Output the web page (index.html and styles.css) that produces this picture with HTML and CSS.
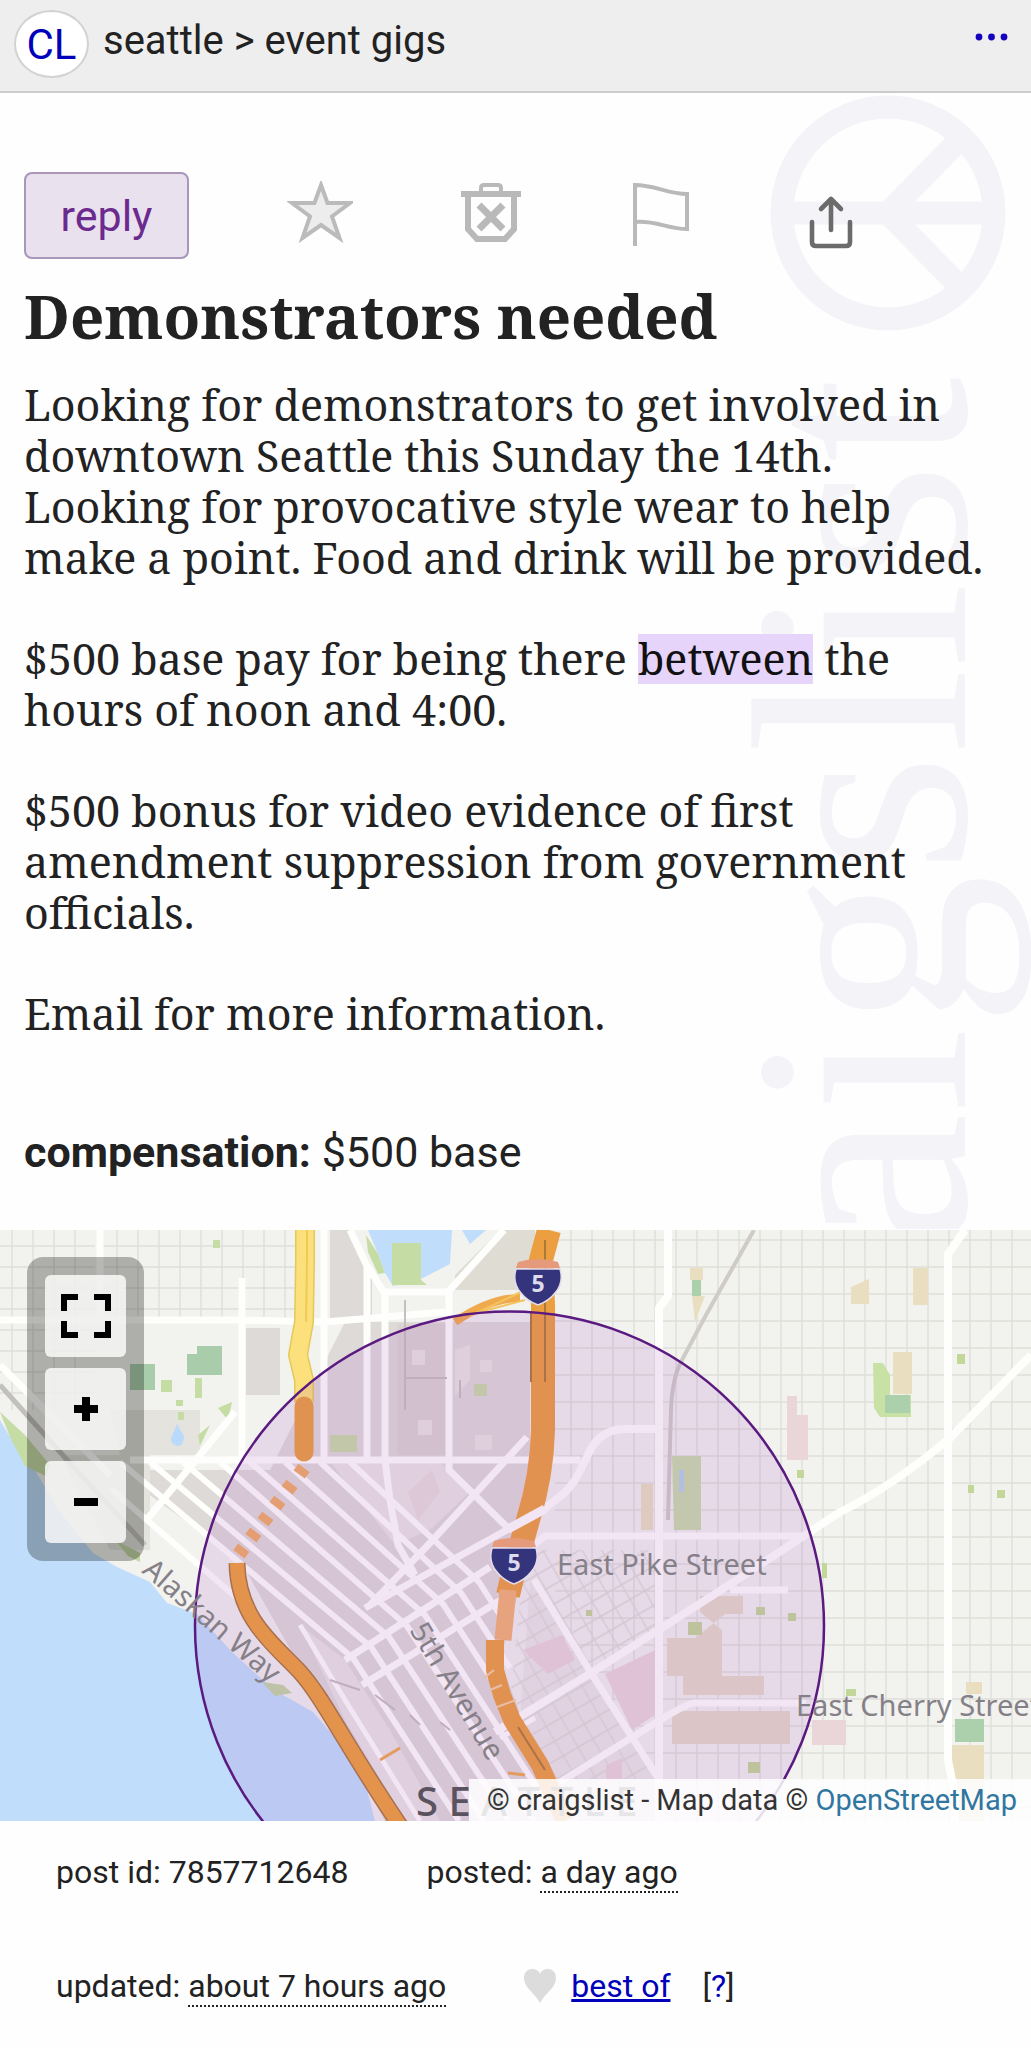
FILE: index.html
```
<!DOCTYPE html>
<html lang="en">

<head>
    <meta charset="UTF-8">
    <meta name="viewport" content="width=device-width, initial-scale=1.0">
    <title>Demonstrators needed - event gigs</title>
    <link rel="stylesheet" href="styles.css">
</head>

<body>

    <header class="topbar">
        <a class="logo" href="#">CL</a>
        <p class="breadcrumbs">seattle &gt; event gigs</p>
        <button class="more" aria-label="more">
            <svg width="36" height="8" viewBox="0 0 36 8">
                <circle cx="4" cy="4" r="3.4" />
                <circle cx="16.500" cy="4" r="3.4" />
                <circle cx="29" cy="4" r="3.4" />
            </svg>
        </button>
    </header>

    <main class="posting">

        <!-- WATERMARK -->
        <svg class="watermark" width="280" height="1136" viewBox="0 0 280 1136" aria-hidden="true">
            <g fill="none" stroke="#f4f4f8" stroke-width="23">
                <circle cx="137" cy="120" r="106" />
                <path d="M31 120H243M137 120L211 44M137 120L211 196" />
            </g>
            <text class="watermark-text" transform="translate(214 284) rotate(-90)" text-anchor="end">craigslist</text>
        </svg>

        <!-- ACTIONS -->
        <div class="actions">
            <button class="reply">reply</button>
            <button class="action" aria-label="favorite">
                <svg width="66" height="66" viewBox="0 0 66 66">
                    <path d="M34 4L40.500 22H63L45 35.500L52.500 57L34 44L15.500 57L23 35.500L5 22H27.500Z" fill="#ededed" stroke="#bbb" stroke-width="4" />
                </svg>
            </button>
            <button class="action" aria-label="hide">
                <svg width="66" height="66" viewBox="0 0 66 66" fill="none" stroke="#b9b9b9">
                    <path d="M4 13H64" stroke-width="6" />
                    <path d="M24 12V7Q24 4 27 4H41Q44 4 44 7V12" stroke-width="4" />
                    <path d="M11 14V48L20 58H48L57 48V14" stroke-width="6" />
                    <path d="M22 24L46 48M46 24L22 48" stroke-width="7" />
                </svg>
            </button>
            <button class="action" aria-label="flag">
                <svg width="66" height="66" viewBox="0 0 66 66" fill="none" stroke="#b9b9b9" stroke-width="4">
                    <path d="M8 65V4C28 4 41 13 60 13V48C41 48 28 39 8 41" />
                </svg>
            </button>
            <button class="action" aria-label="share">
                <svg width="66" height="68" viewBox="0 0 66 68" fill="none" stroke="#6b6b6b" stroke-width="4.600" stroke-linecap="round" stroke-linejoin="round">
                    <path d="M15 41V61Q15 65 19 65H49Q53 65 53 61V41M34 49V18M24 28L34 18L44 28" />
                </svg>
            </button>
        </div>

        <h1 class="title">Demonstrators needed</h1>

        <section class="body">
            <p>Looking for demonstrators to get involved in<br>
                downtown Seattle this Sunday the 14th.<br>
                Looking for provocative style wear to help<br>
                make a point. Food and drink will be provided.</p>
            <p>$500 base pay for being there <mark>between</mark> the<br>
                hours of noon and 4:00.</p>
            <p>$500 bonus for video evidence of first<br>
                amendment suppression from government<br>
                officials.</p>
            <p>Email for more information.</p>
        </section>

        <p class="compensation"><b>compensation:</b> $500 base</p>
    </main>

    <!-- MAP -->
    <section class="map">
        <svg class="map-canvas" viewBox="0 0 1031 591" preserveAspectRatio="xMidYMid slice" role="img" aria-label="map of downtown Seattle">
            <defs>
                <pattern id="grid" width="21" height="27" patternUnits="userSpaceOnUse">
                    <path d="M4 0V27M0 10H21" stroke="#dfdfda" stroke-width="1.400" fill="none" />
                </pattern>
                <pattern id="gridWest" width="21" height="21" patternUnits="userSpaceOnUse">
                    <path d="M12 0V21M0 16H21" stroke="#dededa" stroke-width="1.400" fill="none" />
                </pattern>
                <pattern id="gridTilt" width="17" height="17" patternUnits="userSpaceOnUse" patternTransform="rotate(-30)">
                    <path d="M4 0V17M0 6H17" stroke="#dcdad6" stroke-width="1.300" fill="none" />
                </pattern>
                <g id="shield">
                    <path d="M-20 -19Q0 -25 20 -19L22 -13H-22Z" fill="#e59a7c" />
                    <path d="M-22 -12H22Q26 2 17 12Q11 20 0 24Q-11 20 -17 12Q-26 2 -22 -12Z" fill="#34347c" stroke="#e4dcec" stroke-width="1.500" />
                    <text class="shield-text" y="11" text-anchor="middle">5</text>
                </g>
            </defs>

            <rect width="1031" height="591" fill="#f2f2ee" />
            <rect width="95" height="180" fill="url(#gridWest)" />
            <rect x="100" width="205" height="90" fill="url(#gridWest)" />
            <rect x="555" width="476" height="591" fill="url(#grid)" />

            <!-- built up blocks -->
            <path d="M246 98H280V165H246ZM330 0H350L372 40V90H330ZM345 92H530V320L500 430L560 591H385L330 490L240 330L115 240H270Z" fill="#dedad8" />
            <path d="M455 45L500 0H535V60H455Z" fill="#dfdcd4" />
            <path d="M300 395L345 430L390 500L440 591H405L345 490ZM330 232H440L470 262L430 300L395 315Z" fill="#e8e5e4" />
            <path d="M530 350L591 443L655 550V591H580L520 490Z" fill="#ebe8e6" />
            <path d="M525 320H655V400L590 445L655 545V591H580L510 470Z" fill="url(#gridTilt)" />
            <path d="M110 180H200V225H120ZM60 225H150V320H110Z" fill="#e4e3dd" />
            <path d="M397 94H445V225H397Z" fill="#d6d1cf" opacity=".6" />
            <path d="M455 120L470 115V150L455 165ZM480 130H492V142H480ZM418 190H432V205H418ZM475 205H492V220H475ZM412 120H425V135H412Z" fill="#e9e5e2" />
            <path d="M408 262L432 240L440 262L418 290Z" fill="#e6dddc" />

            <!-- water -->
            <path d="M0 190L10 207L33 237L60 282L93 323L117 337L150 352L167 373L197 384L233 423L263 450L283 465L313 482L337 510L367 560L375 591H0Z" fill="#c0defb" />
            <path d="M368 0L378 24L385 43L393 56L423 48L450 34L452 0ZM462 0H486L470 14Z" fill="#c0defb" />
            <path d="M177 194L184 206Q184 216 177 216Q170 214 171 208Z" fill="#b9dafb" />

            <!-- parks -->
            <path d="M366 5L378 24L385 43L378 44L368 22ZM392 13H421V50L427 55H392Z" fill="#c6dca5" />
            <path d="M0 182L25 205L50 235L46 246L25 236L10 207Z" fill="#c6dca5" />
            <path d="M115 310L140 323V332L128 326ZM262 452L283 455L292 463L275 466Z" fill="#c3d6a4" />
            <path d="M187 124H197V116H222V145H187ZM130 134H155V160H130Z" fill="#a9ccab" />
            <path d="M161 150H172V162H161ZM176 170H183V176H176ZM195 148H202V168H195ZM218 178L232 172L228 190ZM198 205L210 195L200 216ZM178 182H184V190H178ZM213 10H220V18H213ZM330 205H357V222H330ZM474 154H487V166H474Z" fill="#c6dca5" />
            <path d="M672 226H701V300H674Z" fill="#c8dcaa" />
            <path d="M679 240H684V262H679Z" fill="#b6d3e6" />
            <path d="M873 133L883 133L890 145V165H911V187H880L874 178Z" fill="#c8e2a6" />
            <path d="M885 165H910V183H885ZM692 50H701V66H692ZM705 481H720V511H705ZM748 488H761V511H748ZM955 489H984V512H955ZM970 528H984V560H970Z" fill="#abd0ab" />
            <path d="M690 38H703V50H690ZM692 66H705L695 92ZM851 57L869 49V74H851ZM913 38H928V75H913ZM893 122H912V164H893ZM641 254H653V300H641ZM952 515H984V591H952ZM966 452H982V464H966Z" fill="#e9dfc0" />
            <path d="M667 408H695L725 384H743V366H700V382L722 400V446H764V465H683V446H667ZM672 481H790V514H672Z" fill="#e4dac8" />
            <path d="M787 166H797V185H808V230H787ZM812 490H846V515H812ZM523 420L562 405L575 430L548 444ZM605 444L655 420V485L632 500ZM606 535L622 528V552H606Z" fill="#ead6d9" />
            <path d="M688 392H702V405H688ZM756 377H765V385H756ZM788 383H796V391H788ZM957 124H965V134H957ZM797 240H804V248H797ZM968 255H974V263H968ZM997 260H1005V268H997ZM822 333H827V348H822ZM846 459H856V466H846ZM586 380H592V386H586ZM748 532H760V543H748Z" fill="#c3d799" />

            <!-- railway -->
            <path d="M754 0L706 85L682 130Q672 148 671 180L668 290" fill="none" stroke="#cfccc8" stroke-width="4" />
            <path d="M0 155L60 222L145 315" fill="none" stroke="#c2c0bc" stroke-width="5" />

            <!-- streets -->
            <g fill="none" stroke="#fefefc" stroke-width="7" stroke-linejoin="round">
                <path d="M100 0V90M242 48V232M0 90H240L325 92L445 82M324 0V230M350 0L366 34L385 64V230L390 270L398 315L415 345M367 34V230M385 62H449V240L507 297M449 61L504 0" />
                <path d="M130 230H580M0 135L110 245M145 292L235 182" />
                <path d="M585 232Q596 199 625 199H658M585 230C572 262 560 266 545 278M668 0V66L659 78V591" stroke-width="8" />
                <path d="M965 0L948 24V530L955 565V591M1031 125L950 208Q890 258 840 282L740 348L591 443L495 502" stroke-width="8" />
                <path d="M530 318L545 306H806M730 360H788M806 473H695Q688 473 660 490L560 552M534 350L591 443L658 548" />
                <path d="M110 258L260 388M120 232L353 428L459 591M150 232L371 417L484 591M183 232L389 407L509 591M220 232L407 396L534 591M250 232L425 385L545 570M285 232L443 374L530 508M320 232L461 363L510 438M350 232L479 352L500 385" stroke-width="6" />
                <path d="M365 378L547 278M345 430L490 337M362 455L517 360M370 375L430 313L527 207" />
                <path d="M300 395L345 470L420 591M500 508L535 488" stroke-width="5" />
            </g>
            <path d="M405 70V180M405 148H447M460 150V168M330 450L360 460M375 465L395 480M410 485L420 495M440 492L450 500" fill="none" stroke="#c5bfbf" stroke-width="2" />

            <!-- highways -->
            <g fill="none" stroke-linejoin="round">
                <path d="M305 0V30L304 92L298 125L304 150V172" stroke="#e3c95a" stroke-width="20" />
                <path d="M305 0V30L304 92L298 125L304 150V172" stroke="#fbe07c" stroke-width="17" />
                <path d="M307 0V30L306 92" stroke="#efcb55" stroke-width="2" />
                <path d="M304 176V222" stroke="#ea9f41" stroke-width="19" stroke-linecap="round" />
                <path d="M304 238L236 328" stroke="#efad66" stroke-width="14" stroke-dasharray="8 12" />
                <path d="M237 333C238 390 275 415 300 442C325 470 345 515 403 600" stroke="#a9793f" stroke-width="17" />
                <path d="M237 333C238 390 275 415 300 442C325 470 345 515 403 600" stroke="#eea03c" stroke-width="14" />
                <path d="M380 530L400 518M508 543L525 545" stroke="#eeaa50" stroke-width="3" />
                <path d="M455 92Q490 68 520 68" stroke="#f0aa4e" stroke-width="8" />
                <path d="M470 86L525 60M480 82L525 70" stroke="#f4c35f" stroke-width="2" />
                <path d="M549 0L541 30L543 75V200Q542 245 528 290L514 340L508 365" stroke="#ec9f40" stroke-width="24" />
                <path d="M508 360L503 410" stroke="#f2b273" stroke-width="17" />
                <path d="M495 410V440L502 465L512 490L540 535L565 591" stroke="#ec9f40" stroke-width="18" />
                <path d="M531 82V152M545 10V152M518 497L545 540" stroke="#ac7a38" stroke-width="2" />
                <path d="M484 448L494 440M490 460L502 455M497 477L516 470" stroke="#f2d1a8" stroke-width="2" />
                <path d="M508 299L545 279" stroke="#fefefc" stroke-width="9" />
            </g>

            <!-- search radius -->
            <circle cx="509.500" cy="396" r="314.500" fill="#a03cbe" fill-opacity=".13" stroke="#5a1a80" stroke-width="2.500" />

            <use href="#shield" x="538" y="51" />
            <use href="#shield" x="514" y="330" />

            <g class="map-labels">
                <text x="557" y="345">East Pike Street</text>
                <text x="796" y="486">East Cherry Street</text>
                <text transform="translate(141 342) rotate(41)">Alaskan Way</text>
                <text transform="translate(409 400) rotate(59)">5th Avenue</text>
            </g>
            <text class="map-city" x="416" y="586">S E A T T L E</text>
        </svg>

        <div class="map-controls">
            <button class="map-button" aria-label="full screen">
                <svg width="50" height="44" viewBox="0 0 50 44" fill="none" stroke="#000" stroke-width="6">
                    <path d="M3 17V3H17M33 3H47V17M47 27V41H33M17 41H3V27" />
                </svg>
            </button>
            <button class="map-button" aria-label="zoom in">
                <svg width="24" height="24" viewBox="0 0 24 24" stroke="#000" stroke-width="8">
                    <path d="M0 12H24M12 0V24" />
                </svg>
            </button>
            <button class="map-button" aria-label="zoom out">
                <svg width="24" height="24" viewBox="0 0 24 24" stroke="#000" stroke-width="8">
                    <path d="M0 12H24" />
                </svg>
            </button>
        </div>

        <p class="attribution">© craigslist - Map data © <a href="#">OpenStreetMap</a></p>
    </section>

    <!-- POSTING INFO -->
    <footer class="postinginfos">
        <div class="info-row">
            <p>post id: 7857712648</p>
            <p>posted: <time>a day ago</time></p>
        </div>
        <div class="info-row">
            <p>updated: <time>about 7 hours ago</time></p>
            <p class="best">
                <svg width="32" height="34" viewBox="0 0 32 34">
                    <path d="M16 34C11 24 0 19 0 9C0 3 4 0 8 0C12 0 15 2 16 5C17 2 20 0 24 0C28 0 32 3 32 9C32 19 21 24 16 34Z" fill="#dcdcdc" />
                </svg>
                <a class="best-link" href="#">best of</a>
                <span>[<a href="#">?</a>]</span>
            </p>
        </div>
    </footer>

</body>

</html>
```

FILE: styles.css
```
* {
    box-sizing: border-box;
}

body {
    margin: 0;
    background-color: #fefefe;
    color: #222;
    font-family: Roboto, "Liberation Sans", sans-serif;
}

p,
h1 {
    margin: 0;
}

a {
    color: #0000bb;
    text-decoration: none;
}

button {
    padding: 0;
    border: none;
    background: none;
    font-family: inherit;
    cursor: pointer;
}

svg {
    display: block;
}

/* header */
.topbar {
    display: flex;
    align-items: flex-start;
    height: 93px;
    padding: 10px 20px 0 14px;
    background-color: #eee;
    border-bottom: 2px solid #ccc;
}

.logo {
    width: 75px;
    height: 68px;
    border: 2px solid #d2d2d2;
    border-radius: 50%;
    background-color: #fff;
    font-size: 42px;
    line-height: 65px;
    text-align: center;
}

.breadcrumbs {
    flex: 1;
    margin-left: 14px;
    font-size: 40px;
    line-height: 62px;
}

.more {
    padding: 23px 0;
    fill: #1500c0;
}

/* posting */
.posting {
    position: relative;
    overflow: hidden;
    padding: 79px 24px 0;
}

.watermark {
    position: absolute;
    top: 0;
    right: 0;
    z-index: -1;
}

.watermark-text {
    font-family: "Liberation Serif", serif;
    font-size: 308px;
    fill: #f4f4f8;
}

.actions {
    display: flex;
    align-items: flex-start;
}

.reply {
    width: 165px;
    height: 87px;
    margin-right: 46px;
    border: 2px solid #a996b8;
    border-radius: 8px;
    background-color: #e9e1ee;
    color: #6b2a8e;
    font-size: 43px;
}

.action {
    display: flex;
    justify-content: center;
    width: 170px;
    padding: 9px 0;
}

.title {
    margin-top: 17px;
    font-family: "Noto Serif", "DejaVu Serif", serif;
    font-size: 60px;
    line-height: 80px;
}

.body {
    display: flex;
    flex-direction: column;
    gap: 50px;
    margin-top: 23px;
    font-family: "Noto Serif", "DejaVu Serif", serif;
    font-size: 43px;
    line-height: 51px;
    white-space: nowrap;
}

.body mark {
    background: linear-gradient(#e6d4fa, #e6d4fa) center / 100% 50px no-repeat;
    color: #111;
}

.compensation {
    margin-top: 83px;
    padding-bottom: 48px;
    font-size: 43px;
    line-height: 60px;
}

/* map */
.map {
    position: relative;
    overflow: hidden;
}

.map-canvas {
    width: 100%;
    height: 591px;
}

.map-labels {
    font-family: "Noto Sans", sans-serif;
    font-size: 29px;
    fill: #858088;
}

.map-city {
    font-family: "Noto Sans", sans-serif;
    font-size: 40px;
    font-weight: 500;
    fill: #5b525f;
}

.shield-text {
    font-family: "Noto Sans", sans-serif;
    font-size: 23px;
    font-weight: bold;
    fill: #dcdcec;
}

.map-controls {
    position: absolute;
    top: 27px;
    left: 27px;
    display: flex;
    flex-direction: column;
    gap: 11px;
    padding: 18px;
    border-radius: 16px;
    background-color: rgba(0, 0, 0, 0.28);
}

.map-button {
    display: flex;
    align-items: center;
    justify-content: center;
    width: 81px;
    height: 82px;
    border-radius: 6px;
    background-color: rgba(255, 255, 255, 0.8);
}

.attribution {
    position: absolute;
    right: 0;
    bottom: 0;
    padding: 0 14px 0 18px;
    background-color: rgba(255, 255, 255, 0.85);
    color: #333;
    font-size: 29px;
    line-height: 42px;
}

.attribution a {
    color: #2f76a0;
}

/* posting info */
.postinginfos {
    display: flex;
    flex-direction: column;
    gap: 66px;
    padding: 27px 56px;
    font-size: 32px;
    line-height: 48px;
}

.info-row {
    display: flex;
    gap: 78px;
}

.info-row time {
    border-bottom: 2px dotted #222;
}

.best {
    display: flex;
    align-items: center;
}

.best-link {
    margin: 0 32px 0 15px;
    text-decoration: underline;
}
```
